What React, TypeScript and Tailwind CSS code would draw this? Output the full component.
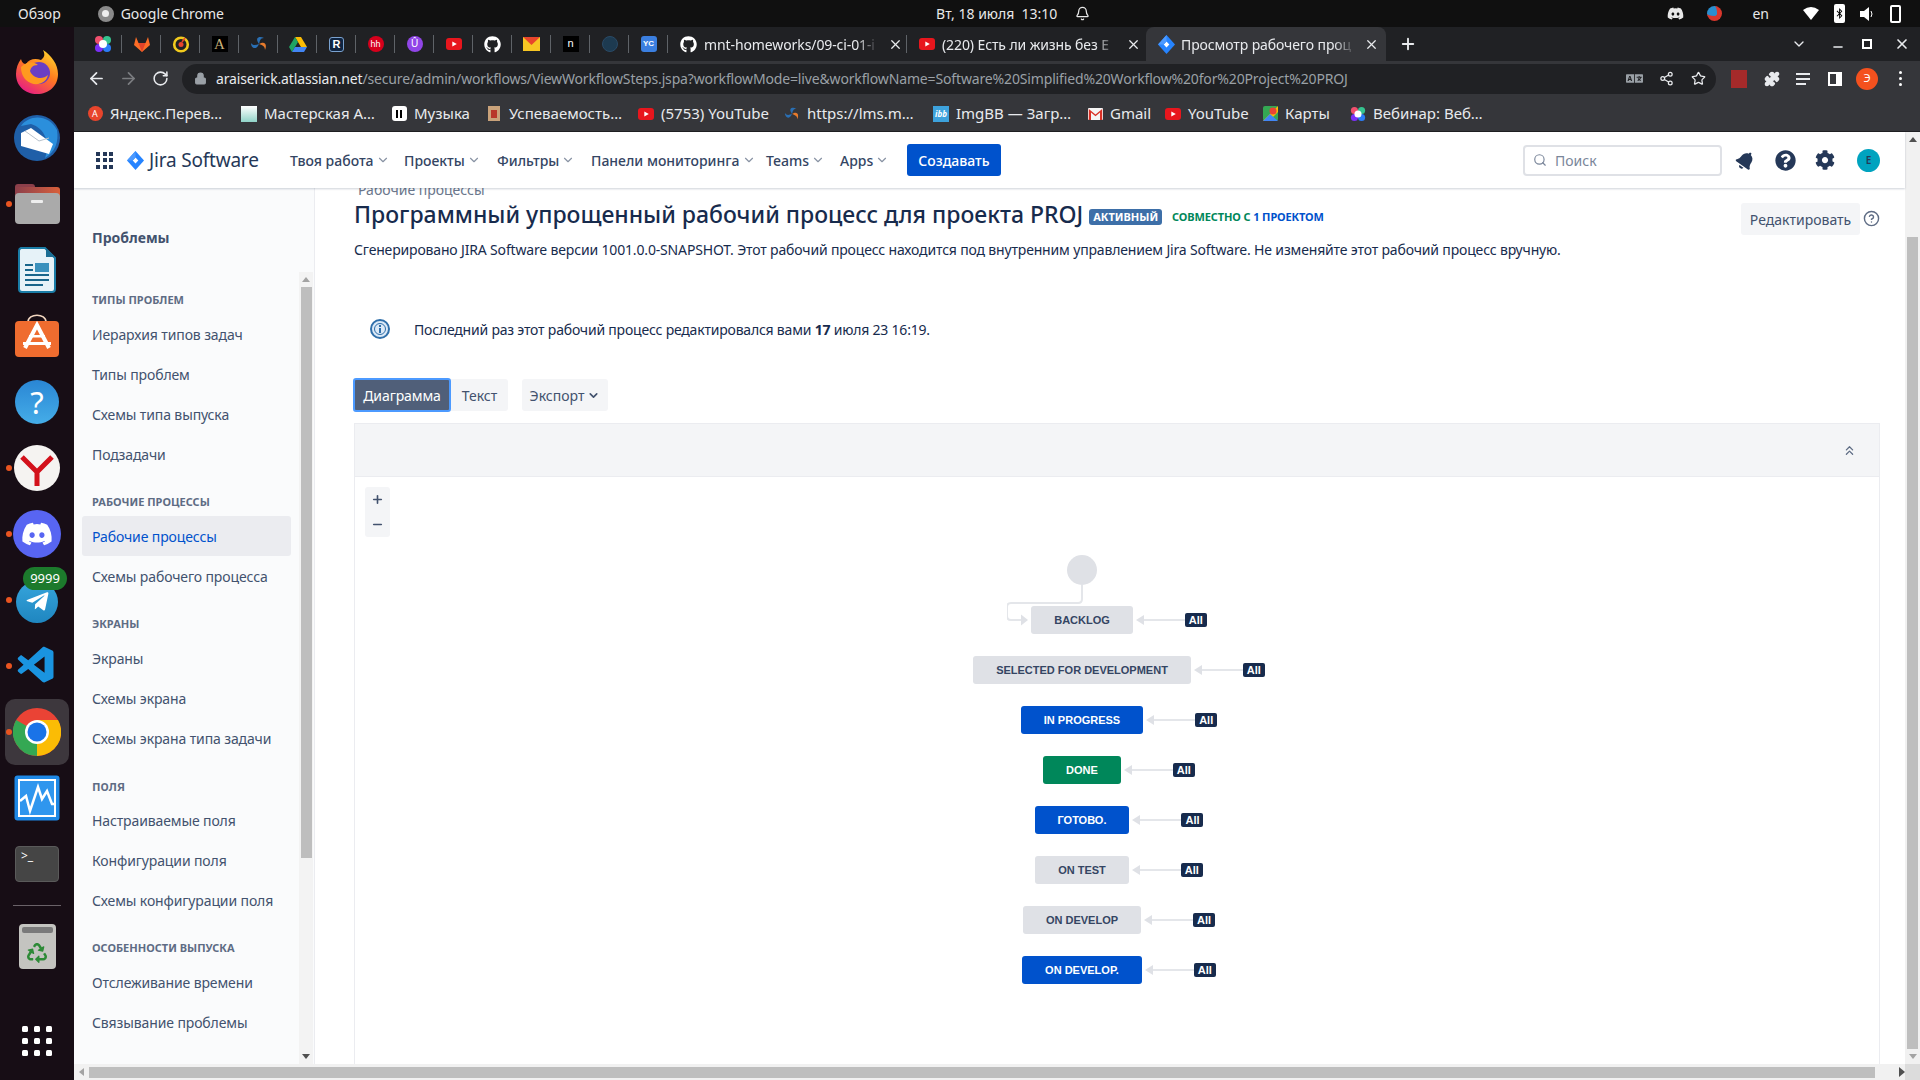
import React from "react";
import {
  ArrowLeft, ArrowRight, RotateCw, Lock, Share2, Star, Puzzle, ChevronDown, ChevronsUp, Plus, X, Minus, Search, HelpCircle, Bell,
} from "lucide-react";
import { FaDiscord, FaTelegramPlane, FaGithub, FaRecycle, FaBell, FaQuestionCircle, FaCog, FaBluetoothB, FaLanguage } from "react-icons/fa";
import { VscVscode } from "react-icons/vsc";

const Chrome = ({ s = 48 }: { s?: number }) => (
  <svg width={s} height={s} viewBox="0 0 48 48">
    <circle cx="24" cy="24" r="24" fill="#ea4335" />
    <path d="M24 24 L3.2 12 A24 24 0 0 0 24 48 Z" fill="#34a853" />
    <path d="M24 24 L24 48 A24 24 0 0 0 45 12 L24 12 Z" fill="#fbbc05" />
    <circle cx="24" cy="24" r="12" fill="#fff" />
    <circle cx="24" cy="24" r="9.5" fill="#1a73e8" />
  </svg>
);

const Firefox = () => (
  <svg width="44" height="46" viewBox="0 0 44 46">
    <defs>
      <linearGradient id="ff" x1="0.8" y1="0" x2="0.2" y2="1">
        <stop offset="0" stopColor="#ffd52e" />
        <stop offset="0.45" stopColor="#ff7a1f" />
        <stop offset="1" stopColor="#e6178a" />
      </linearGradient>
    </defs>
    <path d="M28 1 C36 6 43 15 43 25 C43 37 34 45 22 45 C10 45 1 37 1 25 C1 19 3 14 6 10 C7 14 9 15 11 15 C14 10 20 9 26 11 C30 8 30 5 28 1 Z" fill="url(#ff)" />
    <circle cx="24" cy="24" r="11" fill="#6a3fc4" />
    <path d="M6 18 C12 12 18 12 23 16 C17 16 16 19 15 22 C18 30 28 31 33 26 C31 36 18 38 11 31 C7 27 6 22 6 18 Z" fill="#ff9a1f" />
  </svg>
);

const Thunderbird = () => (
  <svg width="48" height="48" viewBox="0 0 48 48">
    <circle cx="24" cy="24" r="23" fill="#1f5fa8" />
    <path d="M8 12 C16 0 36 0 44 16 C46 28 42 38 32 44 C38 30 32 14 18 10 Z" fill="#2b8fdc" />
    <path d="M8 19 L18 14 L40 30 L36 40 L8 32 Z" fill="#fff" />
    <path d="M12 17 L26 27 L36 24" fill="none" stroke="#b8c2cc" strokeWidth="1" />
  </svg>
);

const Files = () => (
  <div className="relative w-[45px] h-[40px]">
    <div className="absolute left-0 top-0 w-[20px] h-[10px] rounded-t-[3px] bg-[#8c3f4a]" />
    <div className="absolute left-0 top-[3px] w-[45px] h-[20px] rounded-t-[3px] bg-gradient-to-r from-[#8c3f4a] to-[#d9603a]" />
    <div className="absolute left-0 top-[9px] w-[45px] h-[31px] rounded-[4px] bg-[#aaaaaa] flex justify-center pt-[7px]">
      <div className="w-[12px] h-[3px] rounded-[1px] bg-[#eeeeee]" />
    </div>
  </div>
);

const Writer = () => (
  <svg width="38" height="46" viewBox="0 0 38 46">
    <path d="M3 1 H27 L37 11 V42 A3 3 0 0 1 34 45 H4 A3 3 0 0 1 1 42 V4 A3 3 0 0 1 3 1 Z" fill="#e6f2f8" stroke="#1a7ca6" strokeWidth="2" />
    <path d="M28 1 L37 10 H28 Z" fill="#1a6d93" />
    <rect x="7" y="17" width="8" height="2" fill="#18658b" />
    <rect x="7" y="22" width="8" height="2" fill="#18658b" />
    <rect x="7" y="27" width="24" height="2" fill="#18658b" />
    <rect x="7" y="32" width="24" height="2" fill="#18658b" />
    <rect x="7" y="37" width="18" height="2" fill="#18658b" />
    <rect x="17" y="16" width="14" height="9" fill="#3a91bd" />
  </svg>
);

const Store = () => (
  <svg width="46" height="44" viewBox="0 0 46 44">
    <path d="M14 8 C14 -1 32 -1 32 8" fill="none" stroke="#f3d6c0" strokeWidth="1.6" />
    <rect x="1" y="7" width="44" height="36" rx="4" fill="#ef6c2f" />
    <path d="M11 34 L23 11 L35 34" fill="none" stroke="#fff" strokeWidth="4" />
    <rect x="9" y="28" width="28" height="3" fill="#fff" />
    <rect x="15" y="21" width="16" height="2.5" fill="#fff" />
  </svg>
);

const Monitor = () => (
  <svg width="46" height="46" viewBox="0 0 46 46">
    <rect x="0.5" y="0.5" width="45" height="45" rx="3" fill="#1e88e5" />
    <rect x="5" y="5" width="36" height="36" fill="#2f96ee" stroke="#fff" strokeWidth="2" />
    <polyline points="6,26 12,21 16,36 24,12 28,24 33,16 38,29 41,29" fill="none" stroke="#fff" strokeWidth="2.5" />
  </svg>
);

const Dock = () => {
  const Slot = ({ children, dot, active }: { children: React.ReactNode; dot?: boolean; active?: boolean }) => (
    <div className={active ? "relative h-[66px] mx-[5px] rounded-[10px] bg-[#3d373d] flex items-center justify-center" : "relative h-[66px] mx-[5px] flex items-center justify-center"}>
      {dot && <div className="absolute left-[1px] top-[30px] w-[6px] h-[6px] rounded-full bg-[#e95420]" />}
      {children}
    </div>
  );
  return (
    <div className="w-[74px] shrink-0 flex flex-col bg-[#170d15] pt-[12px]">
      <Slot><Firefox /></Slot>
      <Slot><Thunderbird /></Slot>
      <Slot dot><Files /></Slot>
      <Slot><Writer /></Slot>
      <Slot><Store /></Slot>
      <Slot>
        <div className="w-[44px] h-[44px] rounded-full bg-gradient-to-b from-[#2a86d4] to-[#45ade8] flex items-center justify-center text-white text-[31px] font-['Noto_Sans',sans-serif]">?</div>
      </Slot>
      <Slot dot>
        <svg width="46" height="46" viewBox="0 0 46 46">
          <circle cx="23" cy="23" r="23" fill="#f5f3f1" />
          <path d="M8 12 L23 27 L38 12 M23 27 V41" fill="none" stroke="#d3111b" strokeWidth="5" />
        </svg>
      </Slot>
      <Slot dot>
        <div className="w-[48px] h-[48px] rounded-full bg-[#5865f2] flex items-center justify-center text-white"><FaDiscord size={32} /></div>
      </Slot>
      <Slot dot>
        <div className="w-[42px] h-[42px] rounded-full bg-gradient-to-b from-[#36a5dc] to-[#1f86c0] flex items-center justify-center text-white mt-[3px]"><FaTelegramPlane size={25} /></div>
        <div className="absolute left-[18px] top-[0px] w-[44px] h-[23px] rounded-full bg-[#1c7a2c] text-white text-[13px] flex items-center justify-center">9999</div>
      </Slot>
      <Slot dot><VscVscode size={44} color="#1a94e0" /></Slot>
      <Slot dot active><Chrome /></Slot>
      <Slot><Monitor /></Slot>
      <Slot>
        <div className="w-[44px] h-[36px] rounded-[4px] bg-[#454545] border border-[#5a5a5a] text-white text-[12px] leading-[12px] pl-[5px] pt-[3px]">&gt;_</div>
      </Slot>
      <div className="mx-[13px] h-px bg-[#6a6268] mt-[8px]" />
      <Slot>
        <div className="mt-[14px] w-[37px] h-[45px] rounded-[4px] bg-[#c4c4c0] flex flex-col items-center pt-[3px]">
          <div className="w-[31px] h-[6px] rounded-[2px] bg-[#7a7a7a]" />
          <FaRecycle size={20} color="#2d8a36" className="mt-[10px]" />
        </div>
      </Slot>
      <div className="flex-1" />
      <div className="grid grid-cols-3 gap-x-[6px] gap-y-[6px] w-[30px] ml-[22px] mb-[24px]">
        {Array.from({ length: 9 }).map((_, i) => <div key={i} className="w-[6px] h-[6px] rounded-[1.5px] bg-white" />)}
      </div>
    </div>
  );
};

const PinnedIcon = ({ i }: { i: number }) => {
  switch (i) {
    case 0:
      return (
        <svg width="18" height="18" viewBox="0 0 18 18"><circle cx="5" cy="5" r="4" fill="#f0506e" /><circle cx="13" cy="5" r="4" fill="#35c38f" /><circle cx="5" cy="13" r="4" fill="#7b2ff7" /><circle cx="13" cy="13" r="4" fill="#2b7cf6" /><circle cx="9" cy="9" r="4" fill="#fff" /></svg>
      );
    case 1:
      return (
        <svg width="18" height="18" viewBox="0 0 18 18"><path d="M9 17 L1 10 L3 2 L5.5 8 H12.5 L15 2 L17 10 Z" fill="#fc6d26" /><path d="M9 17 L5.5 8 H12.5 Z" fill="#e24329" /></svg>
      );
    case 2:
      return (
        <svg width="18" height="18" viewBox="0 0 18 18"><circle cx="9" cy="9.5" r="6.8" fill="none" stroke="#f2cb1d" strokeWidth="2.6" /><circle cx="9" cy="9.5" r="2.5" fill="#e8452c" /><path d="M10 7 L13 3" stroke="#e8452c" strokeWidth="1.6" /></svg>
      );
    case 3:
      return <div className="w-[16px] h-[16px] bg-black text-[#c9b27a] text-[15px] leading-[16px] text-center font-['Liberation_Serif',serif]">A</div>;
    case 4:
      return (
        <svg width="18" height="18" viewBox="0 0 18 18"><path d="M9 9 C4 2 10 1 14 3 C10 3 10 6 9 9 Z" fill="#2a6fb3" /><path d="M9 9 C16 5 17 11 15 15 C15 11 12 10 9 9 Z" fill="#e87b2c" /><path d="M9 9 C6 16 1 13 1 8 C3 11 6 10 9 9 Z" fill="#2a6fb3" /></svg>
      );
    case 5:
      return (
        <svg width="18" height="16" viewBox="0 0 18 16"><path d="M6 1 H12 L18 11 H12 Z" fill="#fbbc04" /><path d="M6 1 L0 11 L3 16 L9 6 Z" fill="#1fa463" /><path d="M3 16 H15 L18 11 H6 Z" fill="#4285f4" /></svg>
      );
    case 6:
      return <div className="w-[15px] h-[15px] rounded-[3px] border border-[#7aa2d0] bg-[#0f2440] text-white text-[11px] font-bold leading-[13px] text-center font-['Liberation_Sans',sans-serif]">R</div>;
    case 7:
      return <div className="w-[16px] h-[16px] rounded-full bg-[#d6001c] text-white text-[9px] leading-[16px] text-center font-['Liberation_Sans',sans-serif]">hh</div>;
    case 8:
      return <div className="w-[16px] h-[16px] rounded-full bg-[#9146e8] text-white text-[10px] leading-[16px] text-center font-['Liberation_Sans',sans-serif]">Û</div>;
    case 9:
      return <YtIcon />;
    case 10:
      return <FaGithub size={17} color="#fff" />;
    case 11:
      return (
        <svg width="17" height="14" viewBox="0 0 17 14"><rect width="17" height="14" fill="#f7c623" /><path d="M0 0 L8.5 8 L17 0 Z" fill="#e8452c" /></svg>
      );
    case 12:
      return <div className="w-[16px] h-[16px] bg-black text-white text-[11px] leading-[15px] text-center font-['Liberation_Sans',sans-serif]">n</div>;
    case 13:
      return <div className="w-[16px] h-[16px] rounded-full bg-[#1d3a50] border border-[#2a4a66]" />;
    default:
      return <div className="w-[16px] h-[16px] rounded-[3px] bg-[#3b7fe0] text-white text-[8px] font-bold leading-[16px] text-center font-['Liberation_Sans',sans-serif]">YC</div>;
  }
};

const YtIcon = () => (
  <svg width="16" height="12" viewBox="0 0 16 12"><rect width="16" height="12" rx="3" fill="#e8161d" /><path d="M6.3 3.4 L10.8 6 L6.3 8.6 Z" fill="#fff" /></svg>
);

const JiraMark = ({ s = 17 }: { s?: number }) => (
  <svg width={s} height={s + 2} viewBox="0 0 17 19">
    <path d="M8.5 0 L17 9.5 L8.5 19 L0 9.5 Z" fill="#2684ff" />
    <path d="M8.5 6.5 L11.3 9.5 L8.5 12.5 L5.7 9.5 Z" fill="#fff" />
    <path d="M8.5 0 L8.5 6.5 L5.7 9.5 L0 9.5 Z" fill="#4c9aff" />
  </svg>
);

const tabText = "w-[174px] whitespace-nowrap overflow-hidden tracking-[-0.1px] [mask-image:linear-gradient(to_right,black_88%,transparent)]";

const Tabs = () => (
  <div className="h-[34px] shrink-0 flex items-stretch bg-[#202124] text-[#e8eaed] text-[14px] pl-[9px]">
    {Array.from({ length: 15 }).map((_, i) => (
      <div key={i} className="w-[39px] flex items-center justify-center relative">
        <PinnedIcon i={i} />
        <div className="absolute right-0 top-[8px] bottom-[8px] w-px bg-[#5f6368]" />
      </div>
    ))}
    <div className="w-[239px] flex items-center pl-[12px] gap-[7px] relative">
      <FaGithub size={17} color="#fff" className="shrink-0" />
      <span className={tabText}>mnt-homeworks/09-ci-01-i</span>
      <X size={15} strokeWidth={2} className="shrink-0 ml-[3px]" />
      <div className="absolute right-0 top-[8px] bottom-[8px] w-px bg-[#5f6368]" />
    </div>
    <div className="w-[239px] flex items-center pl-[12px] gap-[7px]">
      <YtIcon />
      <span className={tabText}>(220) Есть ли жизнь без Е</span>
      <X size={15} strokeWidth={2} className="shrink-0 ml-[3px]" />
    </div>
    <div className="w-[240px] flex items-center pl-[12px] gap-[6px] bg-[#35363a] rounded-t-[8px]">
      <JiraMark />
      <span className={tabText}>Просмотр рабочего проц</span>
      <X size={15} strokeWidth={2} className="shrink-0 ml-[3px]" />
    </div>
    <div className="w-[44px] flex items-center justify-center"><Plus size={18} strokeWidth={2.5} /></div>
    <div className="flex-1 flex items-center justify-end">
      <ChevronDown size={16} className="mr-[24px]" />
      <Minus size={14} strokeWidth={2.5} className="mr-[17px] mt-[6px]" />
      <div className="w-[10px] h-[10px] border-2 border-white mr-[22px]" />
      <X size={16} strokeWidth={2.5} className="mr-[10px]" />
    </div>
  </div>
);

const UrlBar = () => (
  <div className="h-[35px] shrink-0 bg-[#35363a] flex items-center text-[#e8eaed]">
    <ArrowLeft size={19} strokeWidth={2.2} className="ml-[13px]" />
    <ArrowRight size={19} strokeWidth={2.2} className="ml-[13px] text-[#7b7d80]" />
    <RotateCw size={17} strokeWidth={2.2} className="ml-[14px]" />
    <div className="ml-[13px] w-[1534px] h-[30px] rounded-full bg-[#202124] flex items-center pl-[12px] pr-[10px] text-[14px]">
      <Lock size={13} fill="#9aa0a6" color="#9aa0a6" className="shrink-0" />
      <span className="ml-[9px] whitespace-nowrap tracking-[-0.15px]">araiserick.atlassian.net</span>
      <span className="whitespace-nowrap text-[#9aa0a6] tracking-[-0.15px]">/secure/admin/workflows/ViewWorkflowSteps.jspa?workflowMode=live&amp;workflowName=Software%20Simplified%20Workflow%20for%20Project%20PROJ</span>
      <div className="flex-1" />
      <FaLanguage size={17} color="#9aa0a6" className="mr-[16px]" />
      <Share2 size={15} className="mr-[17px]" />
      <Star size={15} />
    </div>
    <div className="w-[16px] h-[18px] bg-[#a52a2a] ml-[15px]" />
    <Puzzle size={16} fill="#e8eaed" className="ml-[17px]" />
    <div className="ml-[16px] w-[15px] flex flex-col gap-[3px]"><div className="h-[2px] w-[14px] bg-[#e8eaed]" /><div className="h-[2px] w-[14px] bg-[#e8eaed]" /><div className="h-[2px] w-[10px] bg-[#e8eaed]" /></div>
    <div className="ml-[17px] w-[14px] h-[14px] border-2 border-white border-r-[6px]" />
    <div className="ml-[14px] w-[22px] h-[22px] rounded-full bg-[#f4511e] text-white text-[11px] flex items-center justify-center">Э</div>
    <div className="ml-[21px] flex flex-col gap-[3px]"><div className="w-[3px] h-[3px] bg-white rounded-full" /><div className="w-[3px] h-[3px] bg-white rounded-full" /><div className="w-[3px] h-[3px] bg-white rounded-full" /></div>
  </div>
);

const BM = ({ w, icon, text }: { w: string; icon: React.ReactNode; text: string }) => (
  <div className={`${w} flex items-center gap-[7px] shrink-0`}>
    <div className="w-[16px] h-[16px] flex items-center justify-center shrink-0">{icon}</div>
    <span className="whitespace-nowrap">{text}</span>
  </div>
);

const Bookmarks = () => (
  <div className="h-[35px] shrink-0 bg-[#35363a] flex items-center pl-[13px] text-[15px] text-[#e8eaed]">
    <BM w="w-[154px]" text="Яндекс.Перев…" icon={<div className="w-[15px] h-[15px] rounded-full bg-[#e8452c] text-white text-[9px] leading-[15px] text-center">A</div>} />
    <BM w="w-[150px]" text="Мастерская А…" icon={<div className="w-[16px] h-[16px] bg-gradient-to-b from-white to-[#8fd3c8]" />} />
    <BM w="w-[95px]" text="Музыка" icon={<div className="w-[15px] h-[15px] rounded-[3px] bg-white flex items-center justify-center gap-[2px]"><div className="w-[2px] h-[8px] bg-black" /><div className="w-[2px] h-[8px] bg-black" /></div>} />
    <BM w="w-[152px]" text="Успеваемость…" icon={<div className="w-[12px] h-[15px] bg-[#c9a27a] flex items-center justify-center"><div className="w-[6px] h-[8px] bg-[#b8372a]" /></div>} />
    <BM w="w-[146px]" text="(5753) YouTube" icon={<YtIcon />} />
    <BM w="w-[149px]" text="https://lms.m…" icon={<PinnedIcon i={4} />} />
    <BM w="w-[154px]" text="ImgBB — Загр…" icon={<div className="w-[16px] h-[16px] bg-[#3da2dc] text-white text-[8px] italic font-bold leading-[16px] text-center">ibb</div>} />
    <BM w="w-[78px]" text="Gmail" icon={<svg width="15" height="12" viewBox="0 0 15 12"><rect width="15" height="12" rx="1" fill="#f5f5f5" /><path d="M0.8 1 L7.5 6.5 L14.2 1 V12 H12 V4.5 L7.5 8.2 L3 4.5 V12 H0.8 Z" fill="#d93025" /></svg>} />
    <BM w="w-[97px]" text="YouTube" icon={<YtIcon />} />
    <BM w="w-[88px]" text="Карты" icon={<svg width="15" height="15" viewBox="0 0 15 15"><rect width="15" height="15" rx="2" fill="#34a853" /><path d="M0 15 L15 0 V6 L6 15 Z" fill="#fbbc05" /><circle cx="10" cy="5" r="3.5" fill="#ea4335" /><path d="M0 15 L7 8 L15 15 Z" fill="#4285f4" /></svg>} />
    <BM w="w-auto" text="Вебинар: Веб…" icon={<PinnedIcon i={0} />} />
  </div>
);

const navItems: [string, string][] = [
  ["Твоя работа", "w-[114px]"],
  ["Проекты", "w-[93px]"],
  ["Фильтры", "w-[94px]"],
  ["Панели мониторинга", "w-[175px]"],
  ["Teams", "w-[74px]"],
  ["Apps", "w-[67px]"],
];

const JiraNav = () => (
  <div className="h-[56px] shrink-0 bg-white shadow-[0_1px_2px_rgba(9,30,66,0.2)] relative z-10 flex items-center text-[#344563] pr-[21px]">
    <div className="ml-[22px] grid grid-cols-3 gap-[2.5px]">
      {Array.from({ length: 9 }).map((_, i) => <div key={i} className="w-[4px] h-[4px] bg-[#253858]" />)}
    </div>
    <div className="ml-[14px]"><JiraMark /></div>
    <span className="ml-[5px] text-[19px] text-[#253858] tracking-[-0.2px] w-[141px] whitespace-nowrap">Jira Software</span>
    {navItems.map(([t, w]) => (
      <div key={t} className={`${w} flex items-center gap-[2px] text-[14px] font-medium whitespace-nowrap shrink-0`}>
        {t}<ChevronDown size={14} strokeWidth={2} className="text-[#8993a4]" />
      </div>
    ))}
    <div className="w-[94px] h-[32px] rounded-[3px] bg-[#0052cc] text-white text-[14px] font-medium flex items-center justify-center">Создавать</div>
    <div className="flex-1" />
    <div className="w-[199px] h-[31px] border-2 border-[#dfe1e6] rounded-[4px] flex items-center pl-[8px] text-[#7a869a] text-[14px] gap-[8px]">
      <Search size={14} />Поиск
    </div>
    <FaBell size={19} className="ml-[14px] rotate-[35deg] text-[#253858]" />
    <FaQuestionCircle size={21} className="ml-[20px] text-[#253858]" />
    <FaCog size={20} className="ml-[19px] text-[#253858]" />
    <div className="ml-[22px] mr-[4px] w-[23px] h-[23px] rounded-full bg-[#00a3bf] text-[#253858] text-[10px] font-semibold flex items-center justify-center">E</div>
  </div>
);

type G = { title: string; items: string[]; active?: string };
const groups: G[] = [
  { title: "ТИПЫ ПРОБЛЕМ", items: ["Иерархия типов задач", "Типы проблем", "Схемы типа выпуска", "Подзадачи"] },
  { title: "РАБОЧИЕ ПРОЦЕССЫ", items: ["Рабочие процессы", "Схемы рабочего процесса"], active: "Рабочие процессы" },
  { title: "ЭКРАНЫ", items: ["Экраны", "Схемы экрана", "Схемы экрана типа задачи"] },
  { title: "поля", items: ["Настраиваемые поля", "Конфигурации поля", "Схемы конфигурации поля"] },
  { title: "ОСОБЕННОСТИ ВЫПУСКА", items: ["Отслеживание времени", "Связывание проблемы"] },
];

const Sidebar = () => (
  <div className="w-[241px] shrink-0 bg-[#fafbfc] border-r border-[#ebecf0] flex flex-col relative overflow-hidden">
    <div className="pl-[18px] pt-[40px] text-[14px] font-bold text-[#42526e] leading-[20px]">Проблемы</div>
    <div className="pt-[42px] flex flex-col">
      {groups.map((g) => (
        <div key={g.title} className="mb-[18px]">
          <div className={g.title === "поля" ? "pl-[18px] h-[20px] text-[13.5px] font-semibold text-[#5e6c84] flex items-center" : "pl-[18px] h-[20px] text-[11px] font-bold text-[#5e6c84] flex items-center"}>{g.title}</div>
          <div className="flex flex-col mt-[4px]">
            {g.items.map((it) => (
              <div key={it} className={it === g.active ? "ml-[8px] w-[209px] pl-[10px] h-[40px] rounded-[3px] bg-[#ebecf0] text-[#0052cc] text-[14px] tracking-[-0.12px] flex items-center" : "ml-[8px] w-[209px] pl-[10px] h-[40px] text-[#42526e] text-[14px] tracking-[-0.12px] flex items-center whitespace-nowrap"}>{it}</div>
            ))}
          </div>
        </div>
      ))}
    </div>
    <div className="absolute right-[1px] top-[84px] bottom-0 w-[14px] bg-[#f3f3f3] flex flex-col items-center">
      <div className="h-[15px] flex items-center"><div className="w-0 h-0 border-x-[4px] border-x-transparent border-b-[5px] border-b-[#a3a3a3]" /></div>
      <div className="w-[11px] h-[571px] bg-[#bebebe]" />
      <div className="flex-1" />
      <div className="h-[15px] flex items-center"><div className="w-0 h-0 border-x-[4px] border-x-transparent border-t-[5px] border-t-[#505050]" /></div>
    </div>
  </div>
);

const nodes: { t: string; c: string }[] = [
  { t: "BACKLOG", c: "bg-[#dfe1e6] text-[#344563]" },
  { t: "SELECTED FOR DEVELOPMENT", c: "bg-[#dfe1e6] text-[#344563]" },
  { t: "IN PROGRESS", c: "bg-[#0052cc] text-white" },
  { t: "DONE", c: "bg-[#00875a] text-white" },
  { t: "ГОТОВО.", c: "bg-[#0052cc] text-white" },
  { t: "ON TEST", c: "bg-[#dfe1e6] text-[#344563]" },
  { t: "ON DEVELOP", c: "bg-[#dfe1e6] text-[#344563]" },
  { t: "ON DEVELOP.", c: "bg-[#0052cc] text-white" },
];

const Diagram = () => (
  <div className="mt-[12px] border border-[#ebecf0] flex flex-col h-[642px] relative">
    <div className="h-[53px] shrink-0 bg-[#f4f5f7] border-b border-[#ebecf0] flex items-center justify-end pr-[22px] text-[#5e6c84]">
      <ChevronsUp size={15} strokeWidth={2} />
    </div>
    <div className="flex-1 relative">
      <div className="absolute left-[10px] top-[10px] w-[25px] h-[50px] rounded-[3px] bg-[#f4f5f7] flex flex-col items-center justify-around text-[#42526e]">
        <Plus size={13} strokeWidth={3} /><Minus size={13} strokeWidth={3} />
      </div>
      <div className="ml-[618px] w-[218px] pt-[78px] flex flex-col items-center gap-[22px] font-['Liberation_Sans',sans-serif]">
        <div className="relative w-[30px] h-[30px] rounded-full bg-[#dfe1e6] mb-[-1px]">
          <svg className="absolute left-[-60px] top-[30px]" width="95" height="50" viewBox="0 0 95 50" fill="none">
            <path d="M75 0 V14 Q75 18 71 18 H4 Q0 18 0 22 V31 Q0 35 4 35 H16" stroke="#e4e6ea" strokeWidth="2" />
            <path d="M14 29.5 L21 35 L14 40.5 Z" fill="#dfe1e6" />
          </svg>
        </div>
        {nodes.map((n) => (
          <div key={n.t} className={`relative h-[28px] px-[23px] rounded-[3px] flex items-center text-[11px] font-bold whitespace-nowrap ${n.c}`}>
            {n.t}
            <div className="absolute left-full top-0 h-[28px] w-[52px] flex items-center pl-[3px]">
              <div className="w-0 h-0 border-y-[5px] border-y-transparent border-r-[8px] border-r-[#dfe1e6]" />
              <div className="flex-1 h-[2px] bg-[#e4e6ea]" />
            </div>
            <div className="absolute left-[calc(100%+52px)] top-[7px] w-[22px] h-[14px] rounded-[2px] bg-[#172b4d] text-white text-[11px] font-bold flex items-center justify-center">All</div>
          </div>
        ))}
      </div>
    </div>
  </div>
);

const Content = () => (
  <div className="flex-1 min-w-0 flex overflow-hidden">
    <div className="flex-1 min-w-0 pl-[39px] pr-[25px] -mt-[8px] text-[#172b4d]">
      <div className="h-[20px] pl-[4px] text-[14px] text-[#6b778c] leading-[20px]">Рабочие процессы</div>
      <div className="h-[28px] flex items-center relative whitespace-nowrap">
        <span className="text-[23px] font-medium">Программный упрощенный рабочий процесс для проекта PROJ</span>
        <span className="ml-[6px] mt-[6px] h-[16px] px-[4px] rounded-[3px] bg-[#3d6fa8] text-white text-[11px] font-bold flex items-center">АКТИВНЫЙ</span>
        <span className="ml-[10px] mt-[6px] text-[11px] font-bold text-[#00875a] tracking-[-0.12px]">СОВМЕСТНО С <span className="text-[#0052cc]">1 ПРОЕКТОМ</span></span>
        <div className="absolute right-[20px] top-[3px] h-[32px] w-[119px] rounded-[3px] bg-[#f4f5f7] text-[#42526e] text-[14px] flex items-center justify-center">Редактировать</div>
        <HelpCircle size={17} className="absolute right-0 top-[10px] text-[#5e6c84]" />
      </div>
      <div className="mt-[12px] h-[20px] text-[14px] leading-[20px] text-[#172b4d] whitespace-nowrap tracking-[-0.16px]">Сгенерировано JIRA Software версии 1001.0.0-SNAPSHOT. Этот рабочий процесс находится под внутренним управлением Jira Software. Не изменяйте этот рабочий процесс вручную.</div>
      <div className="mt-[59px] h-[20px] flex items-center text-[14px] pl-[16px]">
        <svg width="20" height="20" viewBox="0 0 20 20"><circle cx="10" cy="10" r="9" fill="#dbe9f7" stroke="#2f6faa" strokeWidth="2" /><circle cx="10" cy="10" r="5.5" fill="none" stroke="#2f6faa" strokeWidth="1" /><rect x="9" y="9" width="2" height="5" fill="#2f6faa" /><rect x="9" y="6" width="2" height="2" fill="#2f6faa" /></svg>
        <span className="ml-[24px] tracking-[-0.2px]">Последний раз этот рабочий процесс редактировался вами <b>17</b> июля 23 16:19.</span>
      </div>
      <div className="mt-[40px] h-[32px] flex items-center text-[14px]">
        <div className="w-[98px] h-[34px] -ml-[1px] rounded-[3px] bg-[#505f79] border-2 border-[#4c9aff] text-white flex items-center justify-center tracking-[-0.1px]">Диаграмма</div>
        <div className="w-[57px] h-[32px] rounded-r-[3px] bg-[#f4f5f7] text-[#42526e] flex items-center justify-center">Текст</div>
        <div className="ml-[14px] w-[86px] h-[32px] rounded-[3px] bg-[#f4f5f7] text-[#42526e] flex items-center justify-center gap-[3px]">Экспорт<ChevronDown size={13} strokeWidth={3} /></div>
      </div>
      <Diagram />
    </div>
  </div>
);

const RightScroll = () => (
  <div className="w-[15px] shrink-0 bg-[#f1f1f1] flex flex-col items-center">
    <div className="h-[15px] flex items-center"><div className="w-0 h-0 border-x-[4px] border-x-transparent border-b-[5px] border-b-[#505050]" /></div>
    <div className="mt-[90px] w-[11px] flex-1 bg-[#bebebe]" />
    <div className="h-[15px] flex items-center"><div className="w-0 h-0 border-x-[4px] border-x-transparent border-t-[5px] border-t-[#a3a3a3]" /></div>
  </div>
);

const BottomScroll = () => (
  <div className="h-[16px] shrink-0 bg-[#f1f1f1] flex items-center">
    <div className="w-[15px] flex justify-center"><div className="w-0 h-0 border-y-[4px] border-y-transparent border-r-[5px] border-r-[#a3a3a3]" /></div>
    <div className="w-[1786px] h-[11px] bg-[#bebebe]" />
    <div className="w-[30px] flex justify-end"><div className="w-0 h-0 border-y-[5px] border-y-transparent border-l-[6px] border-l-[#505050]" /></div>
    <div className="flex-1 h-full bg-[#dcdcdc]" />
  </div>
);

export default function App() {
  return (
    <div className="w-[1920px] h-[1080px] flex flex-col overflow-hidden bg-white font-['Noto_Sans',sans-serif]">
      <div className="h-[27px] shrink-0 bg-[#101010] text-[#e8e8e8] text-[14px] flex items-center relative">
        <span className="ml-[18px]">Обзор</span>
        <div className="ml-[37px] w-[16px] h-[16px] rounded-full bg-[#8a8a8a] border-[4px] border-[#8a8a8a] flex items-center justify-center"><div className="w-[7px] h-[7px] rounded-full bg-[#eee]" /></div>
        <span className="ml-[7px]">Google Chrome</span>
        <span className="ml-[712px]">Вт, 18 июля&nbsp;&nbsp;13:10</span>
        <Bell size={15} className="ml-[18px]" />
        <div className="flex-1" />
        <FaDiscord size={17} className="mr-[23px]" />
        <div className="w-[15px] h-[15px] rounded-full bg-[#2a8fd0] border-r-[5px] border-b-[5px] border-[#d9372c] mr-[30px]" />
        <span className="mr-[34px]">en</span>
        <svg width="16" height="13" viewBox="0 0 16 13" className="mr-[15px]"><path d="M0 3 Q8 -3 16 3 L8 13 Z" fill="#fff" /></svg>
        <div className="w-[11px] h-[19px] rounded-[2px] bg-white mr-[15px] flex items-center justify-center text-black"><FaBluetoothB size={11} /></div>
        <svg width="15" height="14" viewBox="0 0 15 14" className="mr-[15px]"><path d="M0 4 H4 L9 0 V14 L4 10 H0 Z" fill="#fff" /><path d="M11 4 Q13 7 11 10" stroke="#fff" fill="none" /></svg>
        <div className="w-[11px] h-[18px] rounded-[2px] border-2 border-white mr-[19px]" />
      </div>
      <div className="flex-1 min-h-0 flex">
        <Dock />
        <div className="flex-1 min-w-0 flex flex-col">
          <Tabs />
          <UrlBar />
          <Bookmarks />
          <div className="h-px shrink-0 bg-[#1f1f22]" />
          <div className="flex-1 min-h-0 flex">
            <div className="flex-1 min-w-0 flex flex-col">
              <JiraNav />
              <div className="flex-1 min-h-0 flex">
                <Sidebar />
                <Content />
              </div>
            </div>
            <RightScroll />
          </div>
          <BottomScroll />
        </div>
      </div>
    </div>
  );
}
